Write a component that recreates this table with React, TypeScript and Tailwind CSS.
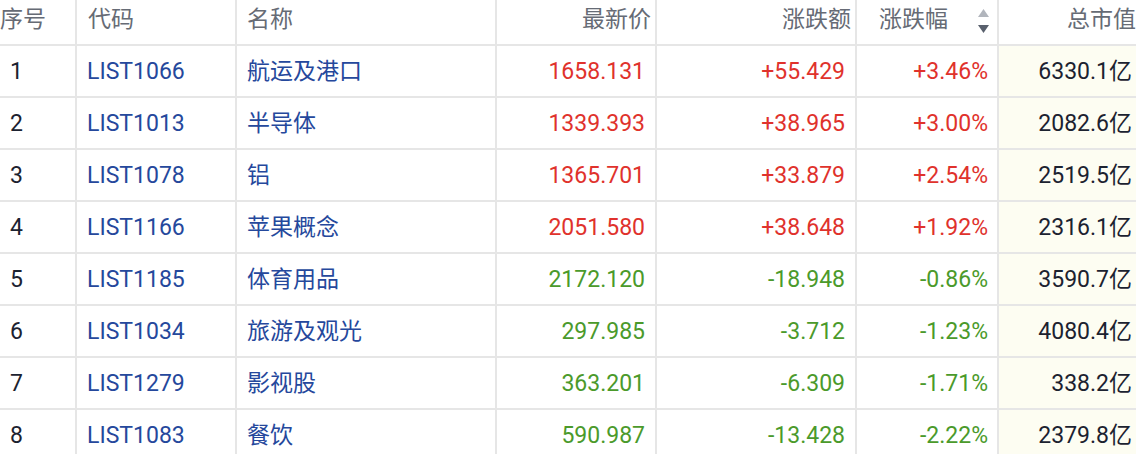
const rows = [
  { no: 1, code: 'LIST1066', name: '航运及港口', price: '1658.131', chg: '+55.429', pct: '+3.46%', cap: '6330.1亿' },
  { no: 2, code: 'LIST1013', name: '半导体', price: '1339.393', chg: '+38.965', pct: '+3.00%', cap: '2082.6亿' },
  { no: 3, code: 'LIST1078', name: '铝', price: '1365.701', chg: '+33.879', pct: '+2.54%', cap: '2519.5亿' },
  { no: 4, code: 'LIST1166', name: '苹果概念', price: '2051.580', chg: '+38.648', pct: '+1.92%', cap: '2316.1亿' },
  { no: 5, code: 'LIST1185', name: '体育用品', price: '2172.120', chg: '-18.948', pct: '-0.86%', cap: '3590.7亿' },
  { no: 6, code: 'LIST1034', name: '旅游及观光', price: '297.985', chg: '-3.712', pct: '-1.23%', cap: '4080.4亿' },
  { no: 7, code: 'LIST1279', name: '影视股', price: '363.201', chg: '-6.309', pct: '-1.71%', cap: '338.2亿' },
  { no: 8, code: 'LIST1083', name: '餐饮', price: '590.987', chg: '-13.428', pct: '-2.22%', cap: '2379.8亿' },
];

const grid = 'grid grid-cols-[77px_160px_260px_160px_200px_142px_141px]';
const cell = 'flex items-center border-r-2 border-[#e6e6e6]';

function SortIcon() {
  return (
    <svg width="11" height="26" viewBox="0 0 11 26" className="ml-[30px] mt-[4px]">
      <path d="M5.5 0 L11 8 L0 8 Z" fill="#b1b5bc" />
      <path d="M0 16 L11 16 L5.5 24 Z" fill="#59606d" />
    </svg>
  );
}

export default function App() {
  return (
    <div
      className="w-[1136px] h-[454px] overflow-hidden bg-white text-[23px]"
      style={{ fontFamily: 'Roboto, "Noto Sans CJK SC", sans-serif' }}
    >
      <div className="w-[1140px]">
        {/* Header */}
        <div className={`${grid} h-[46px] border-b-2 border-[#e6e6e6] text-[#666b75]`}>
          <div className={`${cell} pl-0 pb-[4px]`}>序号</div>
          <div className={`${cell} pl-[11px] pb-[4px]`}>代码</div>
          <div className={`${cell} pl-[10px] pb-[4px]`}>名称</div>
          <div className={`${cell} justify-end pr-[4px] pb-[4px]`}>最新价</div>
          <div className={`${cell} justify-end pr-[4px] pb-[4px]`}>涨跌额</div>
          <div className={`${cell} justify-end pr-[8px] pb-[4px]`}>
            <span>涨跌幅</span>
            <SortIcon />
          </div>
          <div className="flex items-center justify-end pr-[4px] pb-[4px]">总市值</div>
        </div>

        {/* Body */}
        {rows.map((r) => {
          const up = r.chg.startsWith('+');
          const color = up ? 'text-[#e0322c]' : 'text-[#4b9a2b]';
          return (
            <div key={r.no} className={`${grid} h-[52px] border-b-2 border-[#e6e6e6]`}>
              <div className={`${cell} pt-[2px] pl-[10px] text-[#1c2230]`}>{r.no}</div>
              <div className={`${cell} pt-[2px] pl-[10px] text-[#25489c]`}>{r.code}</div>
              <div className={`${cell} pt-[2px] pl-[10px] text-[#25489c]`}>{r.name}</div>
              <div className={`${cell} pt-[2px] justify-end pr-[10px] ${color}`}>{r.price}</div>
              <div className={`${cell} pt-[2px] justify-end pr-[10px] ${color}`}>{r.chg}</div>
              <div className={`${cell} pt-[2px] justify-end pr-[9px] ${color}`}>{r.pct}</div>
              <div className="flex items-center justify-end pt-[2px] pr-[8px] bg-[#fdfdf2] text-[#1c2230]">{r.cap}</div>
            </div>
          );
        })}
      </div>
    </div>
  );
}
